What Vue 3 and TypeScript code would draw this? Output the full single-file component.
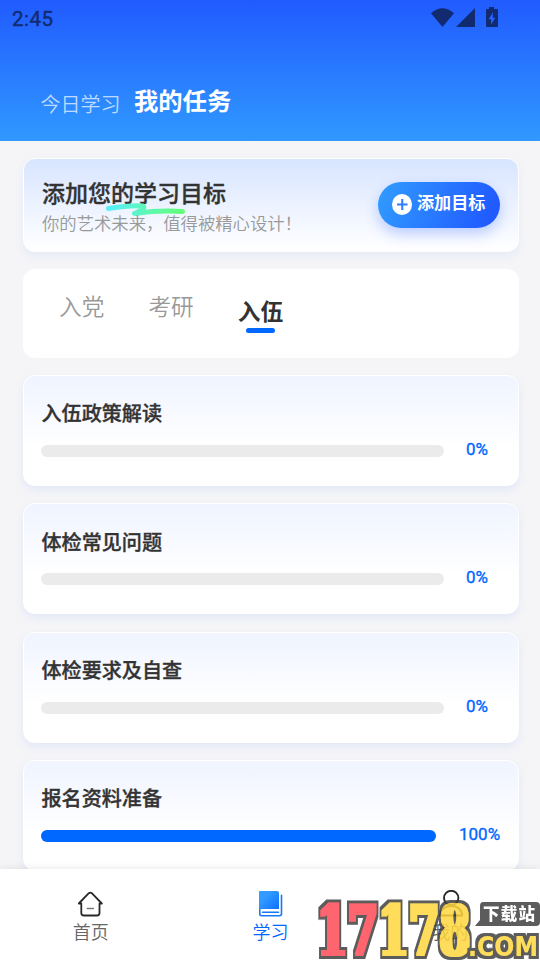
<script setup lang="ts">
interface Task {
  title: string
  progress: number
}

const tabs: string[] = ['入党', '考研', '入伍']
const activeTab = '入伍'

const tasks: Task[] = [
  { title: '入伍政策解读', progress: 0 },
  { title: '体检常见问题', progress: 0 },
  { title: '体检要求及自查', progress: 0 },
  { title: '报名资料准备', progress: 100 },
]
</script>

<template>
  <div class="screen">
    <header class="header">
      <div class="status">
        <span>2:45</span>
        <svg class="status-icons" width="68" height="22" viewBox="0 0 68 22">
          <path d="M1 6.2Q12.500-3.8 24 6.2L12.500 20Z" />
          <path d="M26 20L45 1V20Z" />
          <path fill-rule="evenodd" d="M57 2h2V0h5v2h3q1 0 1 1v16q0 1-1 1H57q-1 0-1-1V3q0-1 1-1ZM62.800 5.500L58.600 12.200h2.500V17.500l4.200-6.800h-2.500Z" />
        </svg>
      </div>
      <nav class="views">
        <span class="view">今日学习</span>
        <span class="view current">我的任务</span>
      </nav>
    </header>

    <main class="content">
      <section class="goal">
        <div class="goal-copy">
          <h1>添加您的学习目标</h1>
          <svg class="swoosh" width="80" height="14" viewBox="0 0 80 14">
            <defs>
              <linearGradient id="swoosh" gradientUnits="userSpaceOnUse" x1="0" y1="0" x2="80" y2="0">
                <stop offset="0" stop-color="#58efff" />
                <stop offset="1" stop-color="#64ff70" />
              </linearGradient>
            </defs>
            <path d="M2.500 5.500Q24 2 37 3Q41 4.500 28.500 10.500Q53 7 76.500 8.500" fill="none" stroke="url(#swoosh)" stroke-width="5" stroke-linecap="round" stroke-linejoin="round" />
          </svg>
          <p>你的艺术未来，值得被精心设计！</p>
        </div>
        <button class="add">
          <svg width="20" height="21" viewBox="0 0 20 21">
            <ellipse cx="10" cy="10.500" rx="10" ry="10.500" fill="#fff" />
            <path d="M5 10.500H15.500M10.250 5V16" stroke="#2c7cff" stroke-width="2" />
          </svg>
          <span>添加目标</span>
        </button>
      </section>

      <section class="tabs">
        <span v-for="tab in tabs" :key="tab" class="tab" :class="{ active: tab === activeTab }">{{ tab }}</span>
      </section>

      <section v-for="task in tasks" :key="task.title" class="task">
        <h2>{{ task.title }}</h2>
        <div class="progress" :class="{ done: task.progress === 100 }">
          <div class="track"><div class="fill" :style="{ width: task.progress + '%' }"></div></div>
          <span class="percent">{{ task.progress }}%</span>
        </div>
      </section>
    </main>

    <nav class="bottom">
      <div class="item">
        <svg width="26" height="28" viewBox="0 0 26 28" fill="none" stroke="#292929" stroke-width="1.800" stroke-linecap="round" stroke-linejoin="round">
          <path d="M.8 13.500L10.800 3.200Q12.300 2 13.800 3.200L23.800 13.500H21.500V23Q21.500 25.500 19 25.500H5.800Q3.300 25.500 3.300 23V13.500Z" />
          <path d="M9.300 18.500H15.300" stroke="#777" stroke-width="1.500" />
        </svg>
        <span>首页</span>
      </div>
      <div class="item selected">
        <svg width="26" height="28" viewBox="0 0 26 28">
          <defs>
            <linearGradient id="book" x1="0" y1="0" x2="1" y2="1">
              <stop offset=".3" stop-color="#329bff" />
              <stop offset="1" stop-color="#096dff" />
            </linearGradient>
          </defs>
          <path d="M2 1H19Q21 1 21 3V19H4Q2 19 1 21V2Q1 1 2 1Z" fill="url(#book)" />
          <path d="M1.800 20V24Q1.800 25.700 3.800 25.700H21.500Q23.500 25.700 23.500 23.500V5.300M4.500 22.300H20.500" fill="none" stroke="#1677ff" stroke-width="1.600" stroke-linecap="round" />
        </svg>
        <span>学习</span>
      </div>
      <div class="item">
        <svg width="26" height="28" viewBox="0 0 26 28" fill="none" stroke="#292929" stroke-width="1.900">
          <circle cx="14.200" cy="8" r="7.200" />
          <path d="M3 25.500Q4 16 14 16T25.500 25.500Z" />
        </svg>
        <span>我的</span>
      </div>
    </nav>

    <svg class="watermark" width="224" height="62" viewBox="0 0 224 62">
      <defs>
        <filter id="block-outline" filterUnits="userSpaceOnUse" x="0" y="0" width="224" height="62">
          <feMorphology in="SourceGraphic" operator="dilate" radius="2 1" result="body" />
          <feMorphology in="SourceAlpha" operator="dilate" radius="4" result="edge" />
          <feFlood flood-color="#414040" />
          <feComposite in2="edge" operator="in" result="outline" />
          <feMerge>
            <feMergeNode in="outline" />
            <feMergeNode in="body" />
          </feMerge>
        </filter>
        <filter id="fine-outline" filterUnits="userSpaceOnUse" x="140" y="28" width="84" height="34">
          <feMorphology in="SourceAlpha" operator="dilate" radius="3" result="edge" />
          <feFlood flood-color="#414040" />
          <feComposite in2="edge" operator="in" result="outline" />
          <feMerge>
            <feMergeNode in="outline" />
            <feMergeNode in="SourceGraphic" />
          </feMerge>
        </filter>
      </defs>
      <g filter="url(#block-outline)">
        <text class="digits" x="1" y="56.500" textLength="153" lengthAdjust="spacingAndGlyphs"><tspan class="red">17</tspan><tspan class="yellow">178</tspan></text>
      </g>
      <path d="M167 4H220Q224 4 224 8V24Q224 28 220 28H159L164 22V8Q164 4 167 4Z" fill="#414040" />
      <text class="site" x="167" y="22" textLength="52">下载站</text>
      <g filter="url(#fine-outline)">
        <text class="com" x="152" y="58" textLength="70" lengthAdjust="spacingAndGlyphs">.COM</text>
      </g>
    </svg>
  </div>
</template>

<style>
body {
  margin: 0;
  overflow: hidden;
}
</style>

<style scoped>
* {
  box-sizing: border-box;
}
.screen {
  position: relative;
  display: flex;
  flex-direction: column;
  width: 540px;
  height: 960px;
  overflow: hidden;
  background: #f5f5f7;
  color: #333;
  font-family: "Noto Sans CJK SC", sans-serif;
}
.header {
  flex: 0 0 141px;
  background: linear-gradient(#215bff, #3099ff);
}
.status {
  display: flex;
  justify-content: space-between;
  height: 38px;
  padding: 7px 42px 0 12px;
  color: #122b70;
  font: 400 20.500px/24px Roboto, sans-serif;
  letter-spacing: 0.5px;
  -webkit-text-stroke: 0.4px #122b70;
}
.status-icons {
  fill: #122b70;
}
.views {
  display: flex;
  align-items: flex-start;
  gap: 13.500px;
  padding: 47px 0 0 40.500px;
}
.view {
  padding-top: 4px;
  color: rgba(255, 255, 255, 0.7);
  font-size: 20px;
  line-height: 30px;
  font-weight: 350;
}
.view.current {
  padding: 0;
  color: #fff;
  font-size: 24.300px;
  font-weight: 700;
}
.content {
  flex: 1;
  min-height: 0;
  overflow: hidden;
  padding: 16.800px 21px 0 23px;
}
.goal {
  display: flex;
  justify-content: space-between;
  height: 94px;
  padding: 23px 18px 16px;
  border: 1px solid #fff;
  border-radius: 12px;
  background: linear-gradient(#d8e5ff, #fff);
  box-shadow: 0 4px 10px rgba(50, 110, 255, 0.08);
}
.goal-copy {
  position: relative;
  margin-top: -6px;
}
.goal h1 {
  margin: 0;
  font-size: 23px;
  line-height: 32px;
  font-weight: 500;
  -webkit-text-stroke: 0.35px #333;
}
.swoosh {
  position: absolute;
  left: 64px;
  top: 27px;
}
.goal p {
  position: relative;
  margin: 2px 0 0;
  color: #999;
  font-size: 17.330px;
  line-height: 26px;
  font-weight: 350;
  white-space: nowrap;
}
.add {
  display: flex;
  align-items: center;
  gap: 5px;
  width: 122px;
  height: 46px;
  padding: 0 0 0 14px;
  border: 0;
  border-radius: 23px;
  background: linear-gradient(110deg, #3099ff 5%, #215bff 90%);
  box-shadow: 0 6px 14px rgba(33, 91, 255, 0.28);
  color: #fff;
  font: 700 17.100px/24px "Noto Sans CJK SC", sans-serif;
}
.add span {
  margin-top: -5.500px;
  white-space: nowrap;
}
.tabs {
  display: flex;
  gap: 44px;
  height: 89px;
  margin-top: 17px;
  padding: 21px 36px;
  border-radius: 12px;
  background: #fff;
}
.tab {
  color: #999;
  font-size: 22.700px;
  line-height: 32px;
  font-weight: 350;
}
.tab.active {
  display: flex;
  flex-direction: column;
  align-items: center;
  padding-top: 5px;
  color: #333;
  font-weight: 700;
}
.tab.active::after {
  content: "";
  width: 29px;
  height: 5px;
  margin-top: 1px;
  border-radius: 3px;
  background: #0068ff;
}
.task {
  height: 111px;
  margin-top: 17.330px;
  padding: 22.300px 17px 0;
  border: 1px solid #fff;
  border-radius: 12px;
  background: linear-gradient(#eff4ff, #fff 65%);
  box-shadow: 0 4px 9px rgba(50, 110, 255, 0.09);
}
.task h2 {
  margin: 0 0 0 0.500px;
  font-size: 20.100px;
  line-height: 30px;
  font-weight: 500;
  -webkit-text-stroke: 0.35px #333;
}
.progress {
  display: flex;
  gap: 22px;
  margin-top: 16.500px;
}
.progress.done {
  gap: 23px;
}
.track {
  width: 403px;
  height: 12px;
  border-radius: 6px;
  background: #ebebeb;
}
.done .track {
  width: 395px;
}
.fill {
  height: 100%;
  border-radius: 6px;
  background: #0068ff;
}
.percent {
  margin-top: -8px;
  color: #0068ff;
  font: 400 17px/24px Roboto, sans-serif;
  -webkit-text-stroke: 0.35px #0068ff;
}
.bottom {
  display: flex;
  flex: 0 0 91px;
  position: relative;
  padding: 21px 0 0 1px;
  background: #fff;
  box-shadow: 0 -1px 8px rgba(0, 0, 0, 0.08);
}
.item {
  display: flex;
  flex: 1;
  flex-direction: column;
  align-items: center;
  color: #666;
  font-size: 18px;
  line-height: 26px;
  font-weight: 350;
}
.selected {
  color: #0068ff;
}
.watermark {
  position: absolute;
  left: 316px;
  top: 898px;
  opacity: 0.85;
}
.digits {
  font: 700 70px "DejaVu Serif", serif;
}
.red {
  fill: #ff4b57;
}
.yellow {
  fill: #ffd73d;
}
.site {
  fill: #fff;
  font: 900 16.500px "Noto Sans CJK SC", sans-serif;
}
.com {
  fill: #ffd73d;
  font: 700 27px "DejaVu Sans", sans-serif;
}
</style>
